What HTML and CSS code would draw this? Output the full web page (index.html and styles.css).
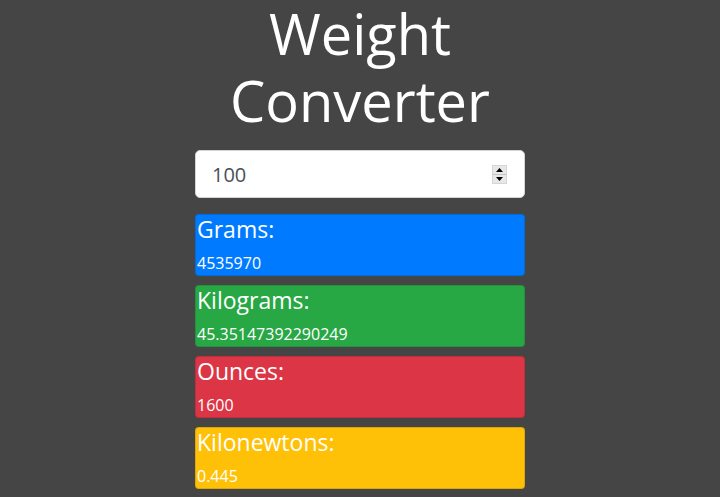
FILE: index.html
```html
<!DOCTYPE html>
<html>
<head>
<meta charset="utf-8">
<link rel="stylesheet" href="styles.css">
</head>
<body>
<div class="wrap">
  <h1 class="title">Weight<br>Converter</h1>
  <div class="field-box">
    <input class="field" type="number" value="100">
    <div class="spin">
      <span class="spin-btn"><svg width="7" height="4" viewBox="0 0 7 4"><path d="M0 4 L3.5 0 L7 4 Z" fill="#000"/></svg></span>
      <span class="spin-btn"><svg width="7" height="4" viewBox="0 0 7 4"><path d="M0 0 L3.5 4 L7 0 Z" fill="#000"/></svg></span>
    </div>
  </div>
  <div class="card blue">
    <h4 class="label">Grams:</h4>
    <div class="value">4535970</div>
  </div>
  <div class="card green">
    <h4 class="label">Kilograms:</h4>
    <div class="value">45.35147392290249</div>
  </div>
  <div class="card red">
    <h4 class="label">Ounces:</h4>
    <div class="value">1600</div>
  </div>
  <div class="card yellow">
    <h4 class="label">Kilonewtons:</h4>
    <div class="value">0.445</div>
  </div>
</div>
</body>
</html>
```
FILE: styles.css
```css
html, body { margin: 0; padding: 0; }
body {
  background: #454545;
  color: #fff;
  font-family: "Open Sans", "Liberation Sans", sans-serif;
  width: 720px;
  height: 497px;
  overflow: hidden;
}
.wrap {
  width: 330px;
  margin: 0 auto;
  display: flex;
  flex-direction: column;
}
.title {
  margin: 0 0 16px;
  font-size: 56px;
  font-weight: 400;
  line-height: 67px;
  text-align: center;
}
.field-box {
  position: relative;
  margin: 0 0 16px;
}
.field {
  display: block;
  box-sizing: border-box;
  height: 48px;
  width: 100%;
  border: 1px solid #ced4da;
  border-radius: 5px;
  background: #fff;
  color: #495057;
  font-family: inherit;
  font-size: 20px;
  padding: 0 10px 0 16px;
  margin: 0;
  -moz-appearance: textfield;
}
.field::-webkit-inner-spin-button,
.field::-webkit-outer-spin-button {
  -webkit-appearance: none;
  margin: 0;
}
.spin {
  position: absolute;
  left: 297px;
  top: 15px;
  width: 15px;
  height: 19px;
  display: flex;
  flex-direction: column;
  background: #e8e8e8;
  border: 1px solid #d6d6d6;
  box-sizing: border-box;
}
.spin-btn {
  flex: 1;
  display: flex;
  align-items: center;
  justify-content: center;
}
.spin-btn + .spin-btn { border-top: 1px solid #c4c4c4; }
.card {
  box-sizing: border-box;
  height: 62px;
  border: 1px solid rgba(0,0,0,0.125);
  border-radius: 4px;
  padding: 0 1px;
  margin-bottom: 9px;
}
.label {
  margin: 0 0 8px;
  font-size: 23px;
  font-weight: 400;
  line-height: 29px;
}
.value {
  font-size: 16px;
  line-height: 22px;
}
.blue { background: #007bff; }
.green { background: #28a745; }
.red { background: #dc3545; }
.yellow { background: #ffc107; }
```
